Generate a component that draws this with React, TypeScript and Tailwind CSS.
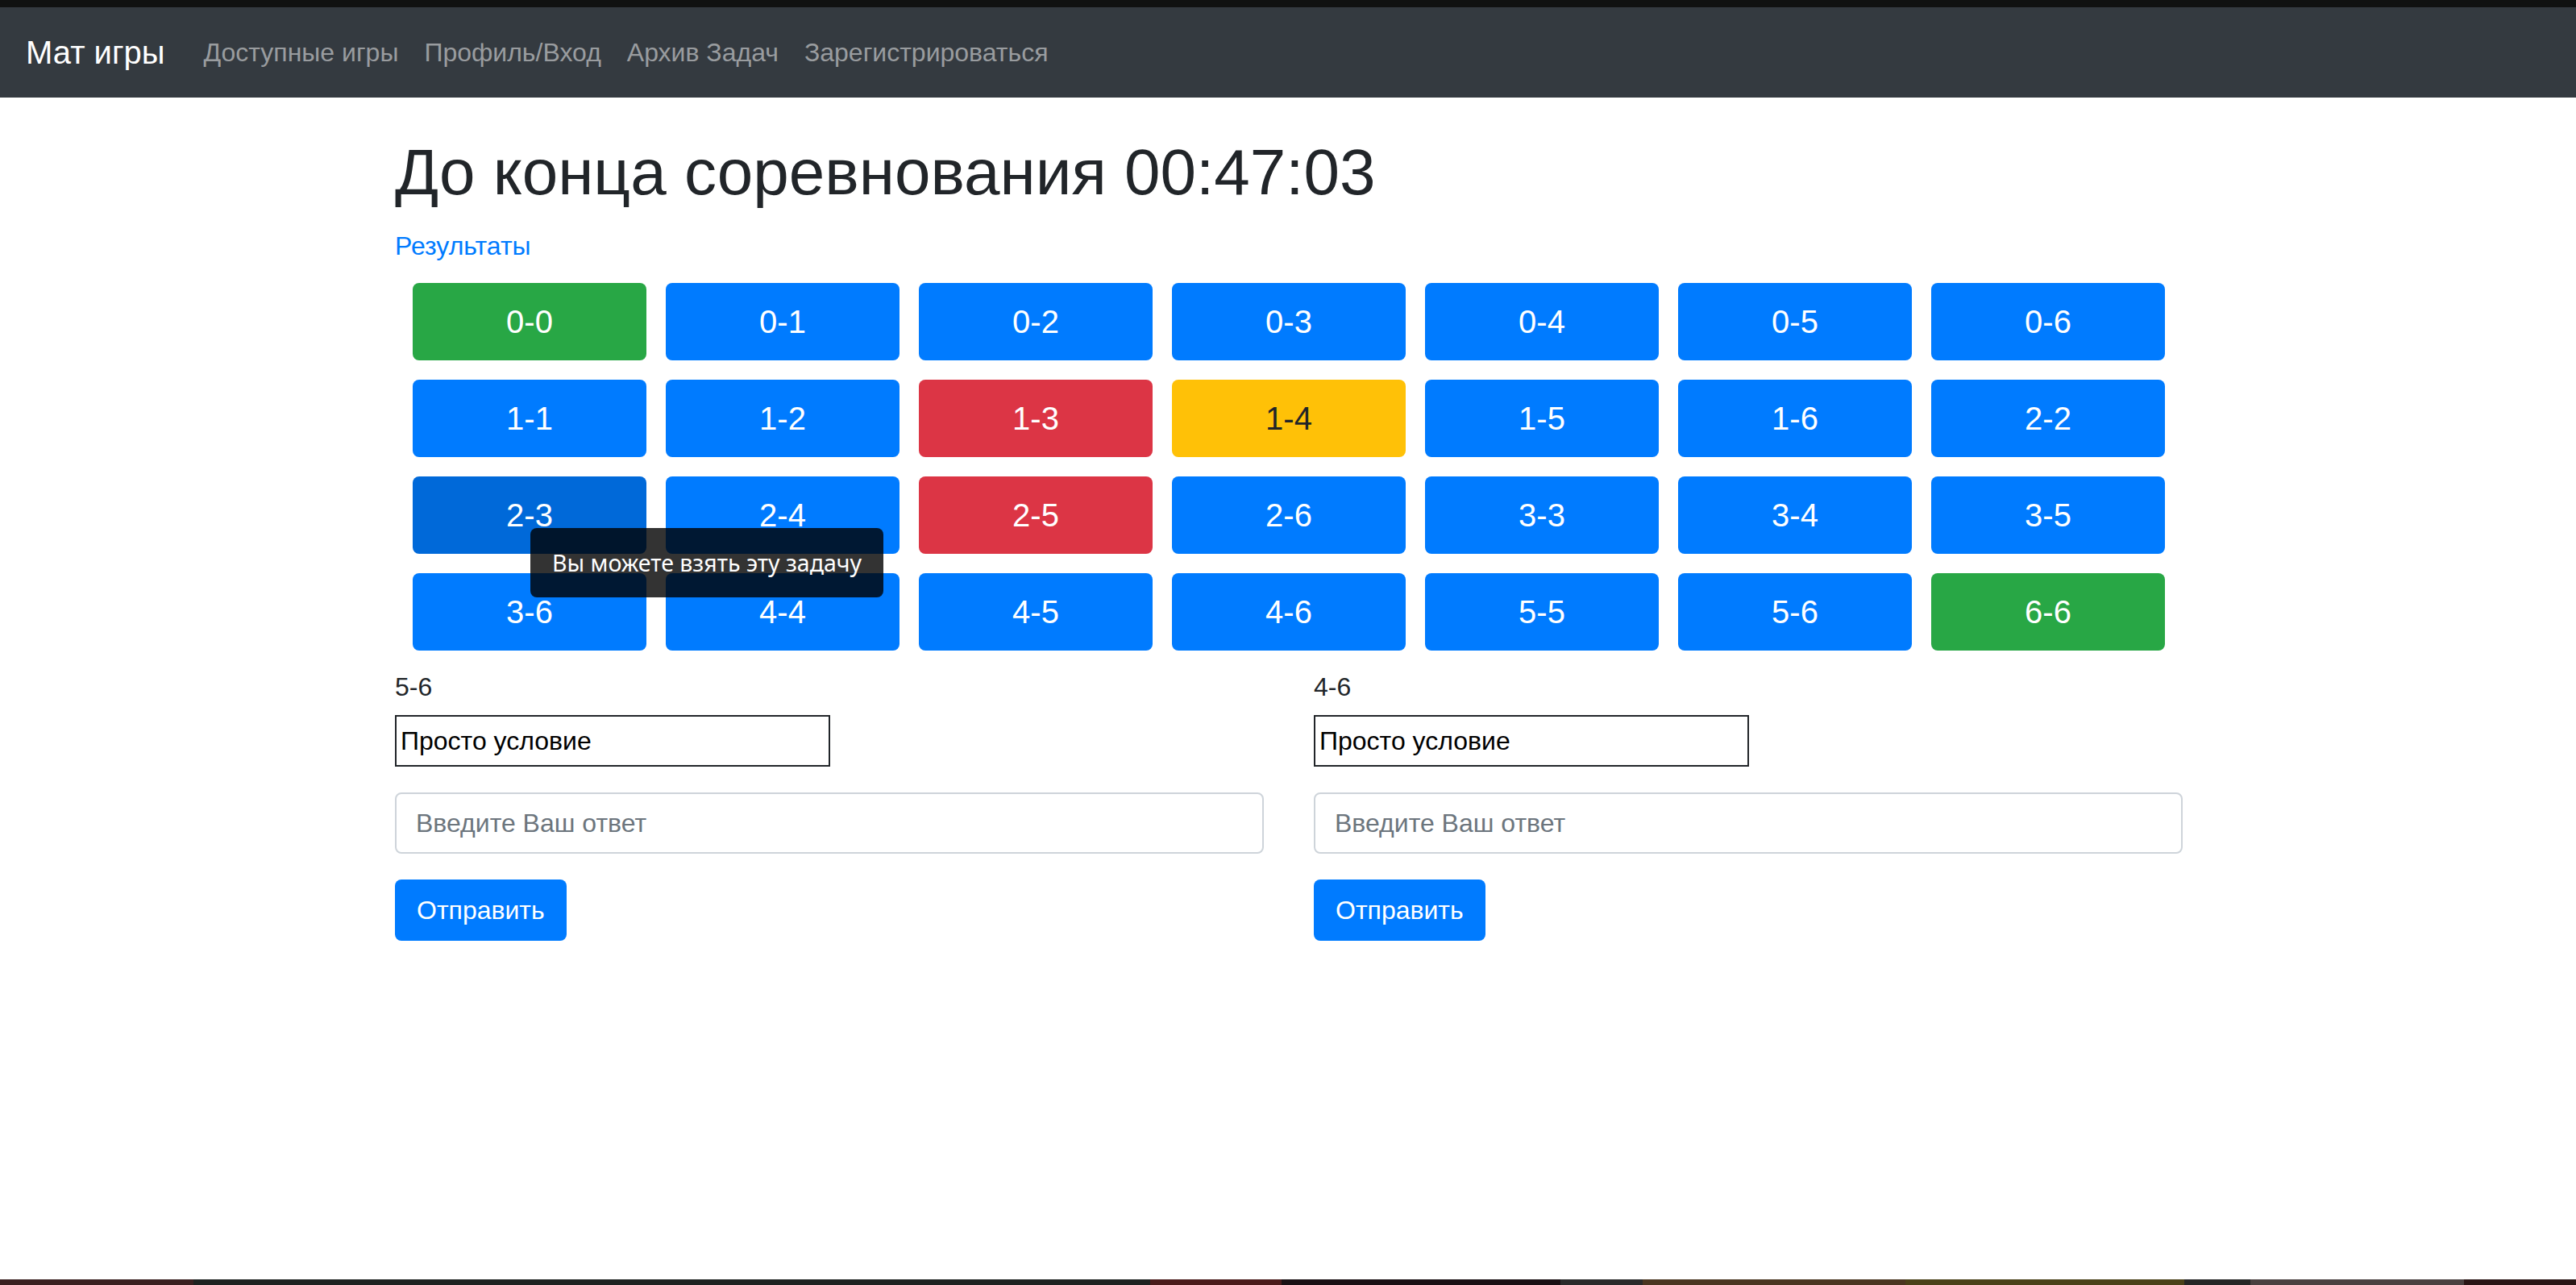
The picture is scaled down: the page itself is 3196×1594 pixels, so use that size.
import React from 'react'

const tiles: [string, string][] = [
  ['0-0', 'ok'], ['0-1', 'open'], ['0-2', 'open'], ['0-3', 'open'], ['0-4', 'open'], ['0-5', 'open'], ['0-6', 'open'],
  ['1-1', 'open'], ['1-2', 'open'], ['1-3', 'fail'], ['1-4', 'taken'], ['1-5', 'open'], ['1-6', 'open'], ['2-2', 'open'],
  ['2-3', 'hover'], ['2-4', 'open'], ['2-5', 'fail'], ['2-6', 'open'], ['3-3', 'open'], ['3-4', 'open'], ['3-5', 'open'],
  ['3-6', 'open'], ['4-4', 'open'], ['4-5', 'open'], ['4-6', 'open'], ['5-5', 'open'], ['5-6', 'open'], ['6-6', 'ok'],
]

const tileStyle: Record<string, string> = {
  ok: 'bg-[#28a745] text-white',
  open: 'bg-[#007bff] text-white',
  hover: 'bg-[#0069d9] text-white',
  fail: 'bg-[#dc3545] text-white',
  taken: 'bg-[#ffc107] text-[#212529]',
}

const links = ['Доступные игры', 'Профиль/Вход', 'Архив Задач', 'Зарегистрироваться']

const active = ['5-6', '4-6']

const taskbar: [string, string][] = [
  ['w-[240px]', 'bg-[#3a2020]'],
  ['w-[1187px]', 'bg-[#1e2220]'],
  ['w-[163px]', 'bg-[#4a1a1a]'],
  ['w-[346px]', 'bg-[#1a1014]'],
  ['w-[102px]', 'bg-[#2a2a2a]'],
  ['w-[326px]', 'bg-[#4a3520]'],
  ['w-[346px]', 'bg-[#4a4018]'],
  ['w-[82px]', 'bg-[#252525]'],
  ['w-[265px]', 'bg-[#4a4040]'],
  ['flex-1', 'bg-[#2a1515]'],
]

function TaskCard({ name }: { name: string }) {
  return (
    <div className="flex flex-col">
      <div className="text-[32px] leading-[48px] text-[#212529]">{name}</div>
      <div className="mt-[11px] w-[540px] h-[64px] border-2 border-[#212529] pl-[5px] flex items-center text-[32px] leading-[48px] text-black">
        Просто условие
      </div>
      <input
        className="mt-[32px] w-full h-[76px] border-2 border-[#ced4da] rounded-[8px] px-[24px] text-[32px] text-[#495057] placeholder:text-[#6c757d] outline-none"
        placeholder="Введите Ваш ответ"
      />
      <div>
        <button className="mt-[32px] h-[76px] px-[27px] rounded-[8px] bg-[#007bff] text-white text-[32px] leading-[48px]">
          Отправить
        </button>
      </div>
    </div>
  )
}

export default function App() {
  return (
    <div className="h-[1594px] flex flex-col bg-white font-['Liberation_Sans',Arial,sans-serif] overflow-hidden">
      <div className="h-[9px] bg-[#101111]" />
      <nav className="h-[112px] bg-[#343a40] flex items-center px-[32px]">
        <span className="text-[40px] leading-[60px] text-white mr-[32px]">Мат игры</span>
        {links.map((l) => (
          <a key={l} className="px-[16px] text-[32px] leading-[48px] text-[#999c9f]">{l}</a>
        ))}
      </nav>

      <main className="flex-1">
        <div className="w-[2220px] mx-auto pl-[2px]">
          <h1 className="mt-[45px] text-[80px] leading-[96px] font-normal text-[#212529]">
            До конца соревнования 00:47:03
          </h1>
          <a className="mt-[19px] block text-[32px] leading-[48px] text-[#007bff]">Результаты</a>

          <div className="relative mt-[22px] flex flex-wrap justify-center gap-[24px]">
            {tiles.map(([label, st]) => (
              <div
                key={label}
                className={'w-[290px] h-[96px] rounded-[8px] flex items-center justify-center text-[40px] ' + tileStyle[st]}
              >
                {label}
              </div>
            ))}
            <div className="absolute left-[168px] top-[304px] w-[438px] h-[86px] rounded-[8px] bg-black/80 flex items-center justify-center text-[28.5px] text-white font-['Noto_Sans',sans-serif]">
              Вы можете взять эту задачу
            </div>
          </div>

          <div className="mt-[21px] grid grid-cols-2 gap-x-[62px]">
            {active.map((n) => (
              <TaskCard key={n} name={n} />
            ))}
          </div>
        </div>
      </main>

      <div className="h-[7px] flex">
        {taskbar.map(([w, c], i) => (
          <div key={i} className={w + ' ' + c} />
        ))}
      </div>
    </div>
  )
}
